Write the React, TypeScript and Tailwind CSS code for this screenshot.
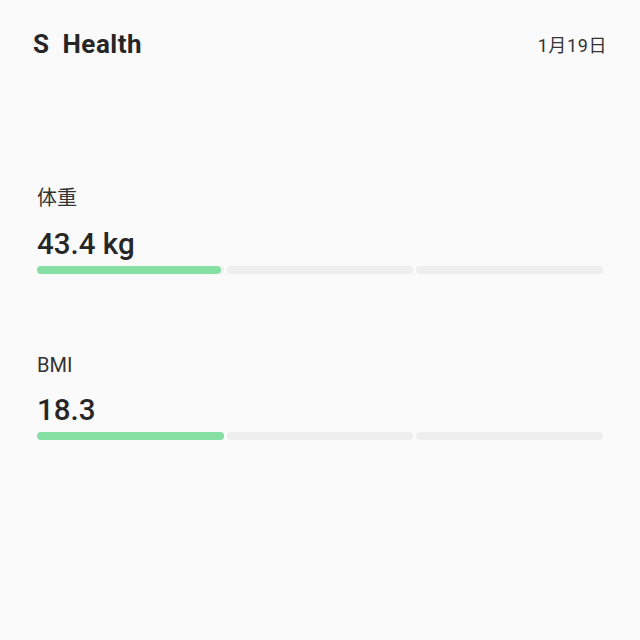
import React from "react";

const font = { fontFamily: "Roboto, 'Noto Sans CJK JP', sans-serif" };

function Bar({ fill }: { fill: number }) {
  return (
    <div className="relative h-[8px] w-full">
      <div className="flex h-full w-full gap-[3px]">
        <div className="flex-1 rounded-full bg-[#eeeeee]" />
        <div className="flex-1 rounded-full bg-[#eeeeee]" />
        <div className="flex-1 rounded-full bg-[#eeeeee]" />
      </div>
      <div
        className="absolute left-0 top-0 h-full rounded-full bg-[#86e0a3]"
        style={{ width: fill }}
      />
    </div>
  );
}

export default function App() {
  return (
    <div
      className="w-[640px] h-[640px] bg-[#fafafa] text-[#222222]"
      style={font}
    >
      <div className="flex items-center justify-between pl-[33px] pr-[33px] pt-[27px]">
        <div className="flex items-center gap-[13px] text-[26px] font-bold tracking-[0.5px] text-[#262626] leading-[30px]">
          <span>S</span>
          <span>Health</span>
        </div>
        <div className="text-[18px] tracking-[0.6px] text-[#333333] leading-[30px] mt-[4px]">1月19日</div>
      </div>

      <div className="px-[37px] mt-[124px]">
        <div className="text-[20px] text-[#333333] leading-[26px]">体重</div>
        <div className="mt-[17px] text-[29.5px] font-medium text-[#262626] leading-[32px]">43.4 kg</div>
        <div className="mt-[6px]">
          <Bar fill={184} />
        </div>

        <div className="mt-[78px] text-[20px] text-[#333333] leading-[26px]">BMI</div>
        <div className="mt-[16px] text-[29.5px] font-medium text-[#262626] leading-[32px]">18.3</div>
        <div className="mt-[6px]">
          <Bar fill={187} />
        </div>
      </div>
    </div>
  );
}
